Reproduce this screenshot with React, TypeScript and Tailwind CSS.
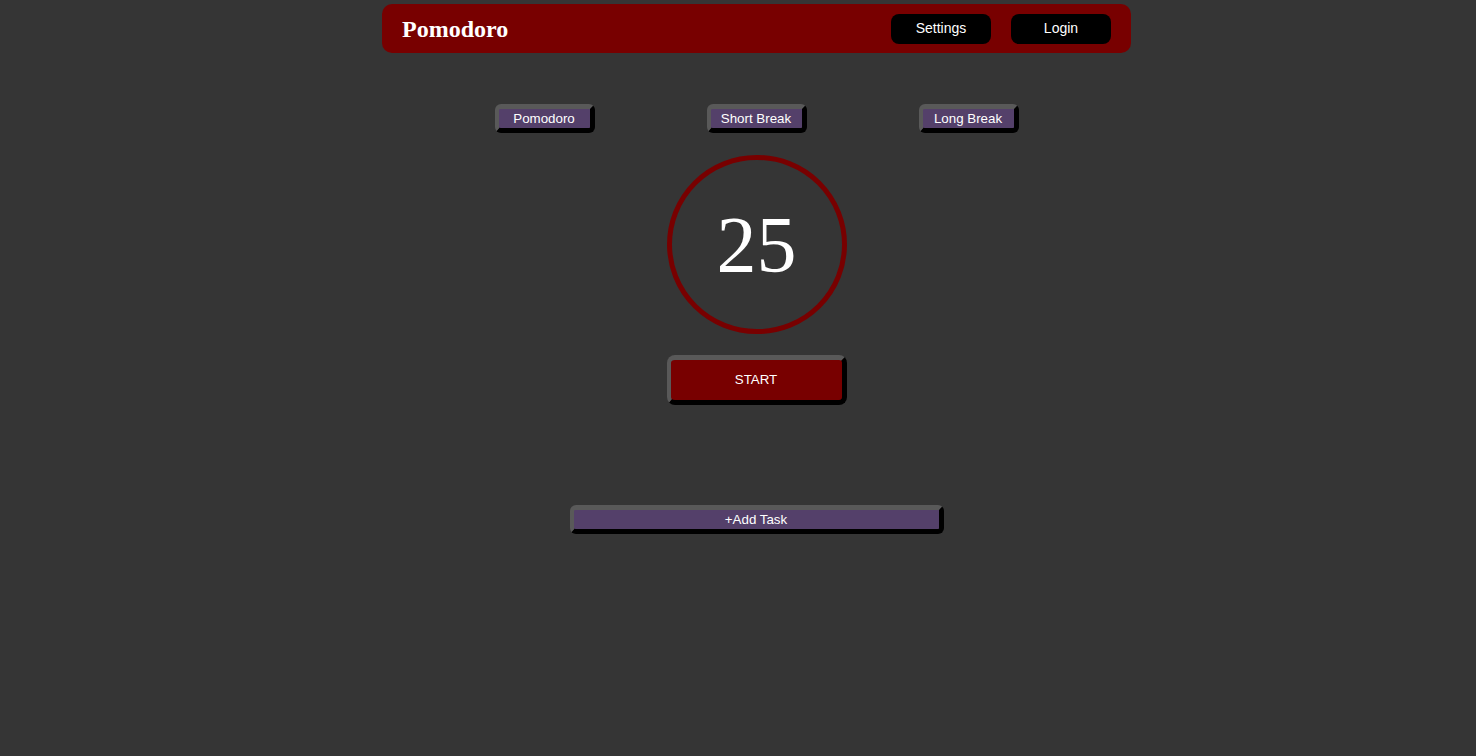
import React, { useState } from "react";

const tabs = ["Pomodoro", "Short Break", "Long Break"];

const raised =
  "border-[5px] border-l-4 border-t-[#595959] border-l-[#595959] border-b-black border-r-black";

const App = () => {
  const [mode, setMode] = useState("Pomodoro");

  const minutes = mode === "Pomodoro" ? 25 : mode === "Short Break" ? 5 : 15;

  return (
    <div
      className="min-h-[756px] w-full bg-[#353535] pl-[37px] pt-1"
      style={{ fontFamily: '"Liberation Sans", Arial, sans-serif' }}
    >
      <div className="mx-auto flex w-[749px] flex-col items-center">
        <header className="flex h-[49px] w-full items-center justify-between rounded-[10px] bg-[#780000] px-5">
          <h1
            className="text-[24px] font-bold text-white"
            style={{ fontFamily: '"Liberation Serif", "Times New Roman", serif' }}
          >
            Pomodoro
          </h1>
          <div className="flex gap-5">
            <button className="h-[30px] w-[100px] rounded-lg bg-black text-[14px] text-white">
              Settings
            </button>
            <button className="h-[30px] w-[100px] rounded-lg bg-black text-[14px] text-white">
              Login
            </button>
          </div>
        </header>

        <div className="mt-[51px] grid w-[636px] grid-cols-3 justify-items-center">
          {tabs.map((t) => (
            <button
              key={t}
              onClick={() => setMode(t)}
              className={`h-[29px] w-[100px] rounded-md bg-[#54406a] text-[13.33px] text-white ${raised}`}
            >
              {t}
            </button>
          ))}
        </div>

        <div className="mt-[22px] flex h-[179px] w-[180px] items-center justify-center rounded-full border-[5px] border-[#780000]">
          <span
            className="text-[80px] leading-none text-white"
            style={{ fontFamily: '"Liberation Serif", "Times New Roman", serif' }}
          >
            {minutes}
          </span>
        </div>

        <button
          className={`mt-[21px] h-[50px] w-[180px] rounded-lg bg-[#780000] text-[13.33px] text-white ${raised}`}
        >
          START
        </button>

        <button
          className={`mt-[100px] h-[29px] w-[374px] rounded-md bg-[#54406a] text-[13.33px] text-white ${raised}`}
        >
          +Add Task
        </button>
      </div>
    </div>
  );
};

export default App;
